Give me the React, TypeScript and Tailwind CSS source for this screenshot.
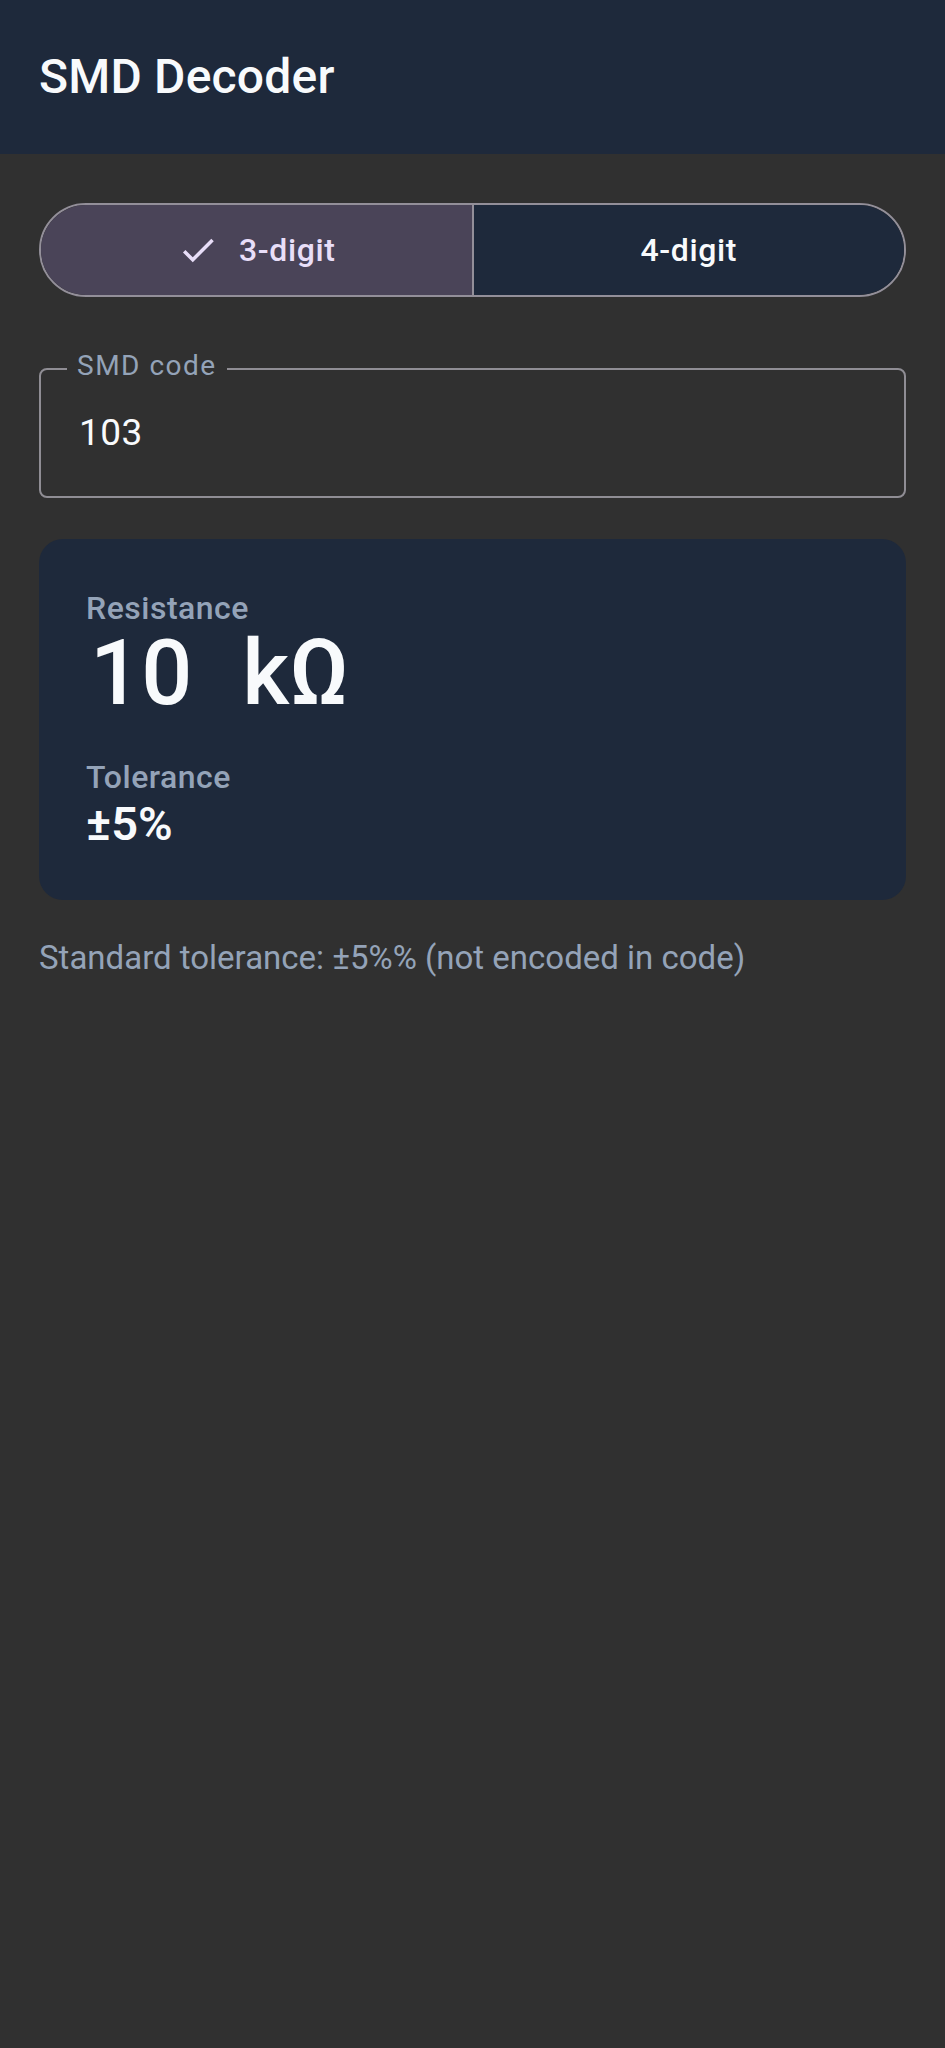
export default function App() {
  return (
    <div className="min-h-screen bg-[#303030] font-[Roboto,sans-serif]">
      <header className="h-[154px] bg-[#1e293b] flex items-center px-[39px]">
        <h1 className="text-[48px] leading-[56px] font-medium tracking-[0.2px] text-[#f8fafc]">SMD Decoder</h1>
      </header>
      <main className="px-[39px] pt-[49px]">
        <div className="flex h-[94px] rounded-full border-2 border-[#938f99] overflow-hidden">
          <button className="flex-1 flex items-center justify-center gap-[20px] bg-[#4a4458] text-[#e8def8]">
            <svg width="42" height="42" viewBox="0 0 24 24" fill="currentColor" aria-hidden="true">
              <path d="M9 16.17L4.83 12l-1.42 1.41L9 19 21 7l-1.41-1.41z" />
            </svg>
            <span className="text-[32px] leading-[40px] font-medium tracking-[0.6px]">3-digit</span>
          </button>
          <button className="flex-1 flex items-center justify-center bg-[#1e293b] text-[#f8fafc] border-l-2 border-[#938f99]">
            <span className="text-[32px] leading-[40px] font-medium tracking-[0.6px]">4-digit</span>
          </button>
        </div>

        <div className="relative mt-[71px] h-[130px] rounded-[8px] border-2 border-[#8f8d94] flex items-center pl-[38px]">
          <span className="absolute -top-[20px] left-[26px] px-[10px] bg-[#303030] text-[28px] leading-[32px] tracking-[1.5px] text-[#94a3b8]">
            SMD code
          </span>
          <span className="text-[37px] leading-[44px] tracking-[0.5px] text-[#f8fafc]">103</span>
        </div>

        <div className="mt-[41px] rounded-[24px] bg-[#1e293b] pl-[47px] pr-[49px] pt-[49px] pb-[49px] flex flex-col">
          <div className="text-[32px] leading-[40px] font-medium tracking-[0.5px] text-[#94a3b8]">Resistance</div>
          <div className="flex ml-[4px] text-[90px] leading-[92px] font-medium text-[#f8fafc]">
            <span>10</span>
            <span className="ml-[50px]">kΩ</span>
          </div>
          <div className="mt-[37px] text-[32px] leading-[40px] font-medium tracking-[0.5px] text-[#94a3b8]">Tolerance</div>
          <div className="text-[47px] leading-[54px] font-semibold text-[#f8fafc]">±5%</div>
        </div>

        <p className="mt-[36px] text-[33px] leading-[44px] text-[#94a3b8]">
          Standard tolerance: ±5%% (not encoded in code)
        </p>
      </main>
    </div>
  );
}
